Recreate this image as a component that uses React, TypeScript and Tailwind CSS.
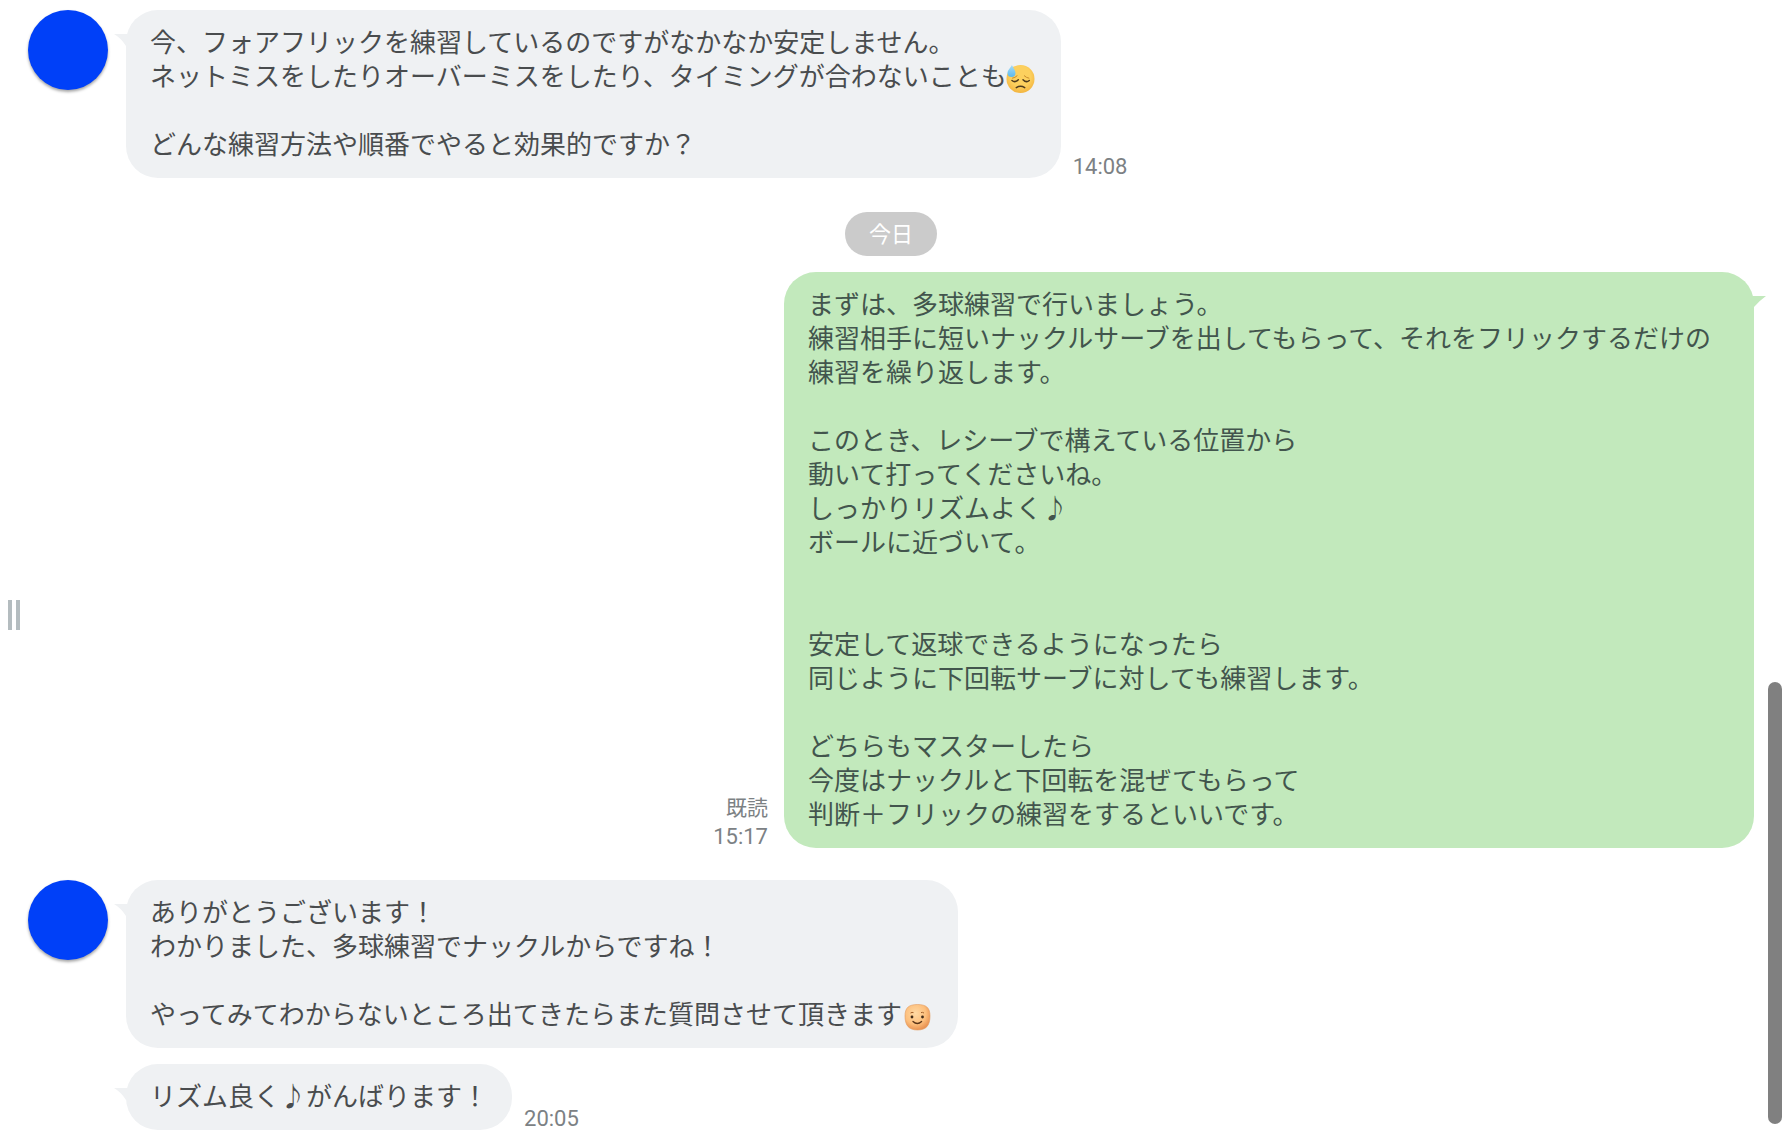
import type { ReactNode } from 'react';

// Face with a cold sweat drop
const SweatFace = () => (
  <svg role="img" aria-label="sweat face" viewBox="1 -2 30 34" className="inline-block h-[34px] w-[30px] overflow-visible align-top">
    <defs>
      <radialGradient id="sweatFill" cx="0.5" cy="0.4" r="0.6">
        <stop offset="0.6" stopColor="#fcd05e" />
        <stop offset="1" stopColor="#f3b53f" />
      </radialGradient>
      <linearGradient id="dropFill" x1="0" y1="0" x2="0" y2="1">
        <stop offset="0" stopColor="#a9dcf5" />
        <stop offset="1" stopColor="#5bb9ee" />
      </linearGradient>
    </defs>
    <circle cx="14.5" cy="19" r="14" fill="url(#sweatFill)" />
    <g fill="none" stroke="#4d3a1c" strokeLinecap="round">
      <path d="M6 20.5q3 2.6 6.3-.8" strokeWidth="1.5" />
      <path d="M17 19.7q3.3 3.4 6.3.8" strokeWidth="1.5" />
      <path d="M10.300 27.600q4.200-2.600 8.400 0" strokeWidth="1.5" />
      <path d="M6.5 18.2q2.6-.4 4.6-2.4M18.3 15.8q2 2 4.6 2.4" stroke="#c78a2c" strokeWidth="1" />
    </g>
    <path d="M5.9 5c1.2 3 3.6 5 3.6 8a4 4 0 0 1-8 0c0-3 3.2-5 4.4-8z" fill="url(#dropFill)" />
  </svg>
);

const SmileFace = () => (
  <svg role="img" aria-label="smile" viewBox="-2 -2 32 34" className="inline-block h-[34px] w-8 overflow-visible align-top">
    <defs>
      <radialGradient id="smileFill" cx="0.42" cy="0.35" r="0.7">
        <stop offset="0" stopColor="#ffd9a3" />
        <stop offset="0.6" stopColor="#fdbf7c" />
        <stop offset="1" stopColor="#e58a4a" />
      </radialGradient>
    </defs>
    <path
      d="M13.5 6.500c9 0 12.5 3.5 12.5 11.5 0 9-3.5 14-12.5 14s-12.5-5-12.5-14c0-8 3.5-11.5 12.5-11.5z"
      fill="url(#smileFill)"
      stroke="#e39a5c"
      strokeWidth="0.6"
    />
    <path d="M6.5 15q1.5-1 3-.4M17 14.6q1.5-.6 3 .4" fill="none" stroke="#a5622c" strokeWidth="1" />
    <circle cx="8" cy="19" r="1.4" fill="#3f2a18" />
    <circle cx="18.5" cy="19" r="1.4" fill="#3f2a18" />
    <path d="M9 23.5q4.3 4 8.6 0" fill="none" stroke="#5a3418" strokeWidth="1.3" strokeLinecap="round" />
  </svg>
);

const Avatar = () => (
  <div className="size-20 shrink-0 rounded-full bg-[#0040f8] shadow-[0_2px_3px_rgba(0,0,0,0.35)]" />
);

type BubbleProps = { children: ReactNode; mine?: boolean };

const Bubble = ({ children, mine }: BubbleProps) => (
  <div
    className={
      mine
        ? 'relative max-w-[970px] rounded-[32px] bg-[#c2e9bc] px-6 pt-[14px] pb-[18px] text-[#42554d]'
        : 'relative rounded-[32px] bg-[#eff1f3] px-6 pt-[14px] pb-[18px] text-[#494c4e]'
    }
  >
    {mine ? (
      <svg viewBox="0 0 16 14" className="absolute top-6 -right-3 h-[14px] w-4 fill-[#c2e9bc]">
        <path d="M0 0H16Q9 5 4 11L0 14z" />
      </svg>
    ) : (
      <svg viewBox="0 0 16 14" className="absolute top-6 -left-3 h-[14px] w-4 fill-[#eff1f3]">
        <path d="M16 0H0Q7 4 12 12L16 14z" />
      </svg>
    )}
    <p className="text-[26px] leading-[34px] whitespace-pre-wrap">{children}</p>
  </div>
);

const Received = ({ children, time, avatar }: { children: ReactNode; time?: string; avatar?: boolean }) => (
  <li className="flex items-start gap-[18px]">
    {avatar ? <Avatar /> : <div className="w-20 shrink-0" />}
    <div className="flex items-end gap-3">
      <Bubble>{children}</Bubble>
      {time && <Time>{time}</Time>}
    </div>
  </li>
);

const Time = ({ children }: { children: string }) => (
  <time className="font-[Roboto,sans-serif] text-[22px] leading-[22px] text-[#7c8184]">{children}</time>
);

const answer = `まずは、多球練習で行いましょう。
練習相手に短いナックルサーブを出してもらって、それをフリックするだけの練習を繰り返します。

このとき、レシーブで構えている位置から
動いて打ってくださいね。
しっかりリズムよく♪
ボールに近づいて。


安定して返球できるようになったら
同じように下回転サーブに対しても練習します。

どちらもマスターしたら
今度はナックルと下回転を混ぜてもらって
判断＋フリックの練習をするといいです。`;

const App = () => {
  return (
    <main
      lang="ja"
      className="relative min-h-screen bg-white pt-[10px] pr-[30px] pb-4 pl-7 font-['Noto_Sans_CJK_JP',sans-serif]"
    >
      <ul className="flex flex-col">
        <Received avatar time="14:08">
          {'今、フォアフリックを練習しているのですがなかなか安定しません。\nネットミスをしたりオーバーミスをしたり、タイミングが合わないことも'}
          <SweatFace />
          {'\n\nどんな練習方法や順番でやると効果的ですか？'}
        </Received>

        <li className="mt-[34px] mb-4 flex justify-center">
          <span className="h-[44px] rounded-full bg-[#cbcbcb] px-6 text-[22px] leading-10 text-white">今日</span>
        </li>

        <li className="flex items-end justify-end gap-4">
          <div className="flex flex-col items-end gap-2 text-[21px] leading-6 text-[#7c8184]">
            <span>既読</span>
            <Time>15:17</Time>
          </div>
          <Bubble mine>{answer}</Bubble>
        </li>

        <li className="mt-8">
          <ul className="flex flex-col gap-4">
            <Received avatar>
              {'ありがとうございます！\nわかりました、多球練習でナックルからですね！\n\nやってみてわからないところ出てきたらまた質問させて頂きます'}
              <SmileFace />
            </Received>
            <Received time="20:05">リズム良く♪がんばります！</Received>
          </ul>
        </li>
      </ul>

      {/* pane resize handle */}
      <div className="absolute top-[600px] left-2 flex h-[30px] gap-1">
        <div className="w-[4px] bg-[#b4bcbf]" />
        <div className="w-[4px] bg-[#b4bcbf]" />
      </div>

      {/* scrollbar thumb */}
      <div className="absolute right-[2px] bottom-[22px] h-[442px] w-[14px] rounded-full bg-[#808080]" />
    </main>
  );
};

export default App;
